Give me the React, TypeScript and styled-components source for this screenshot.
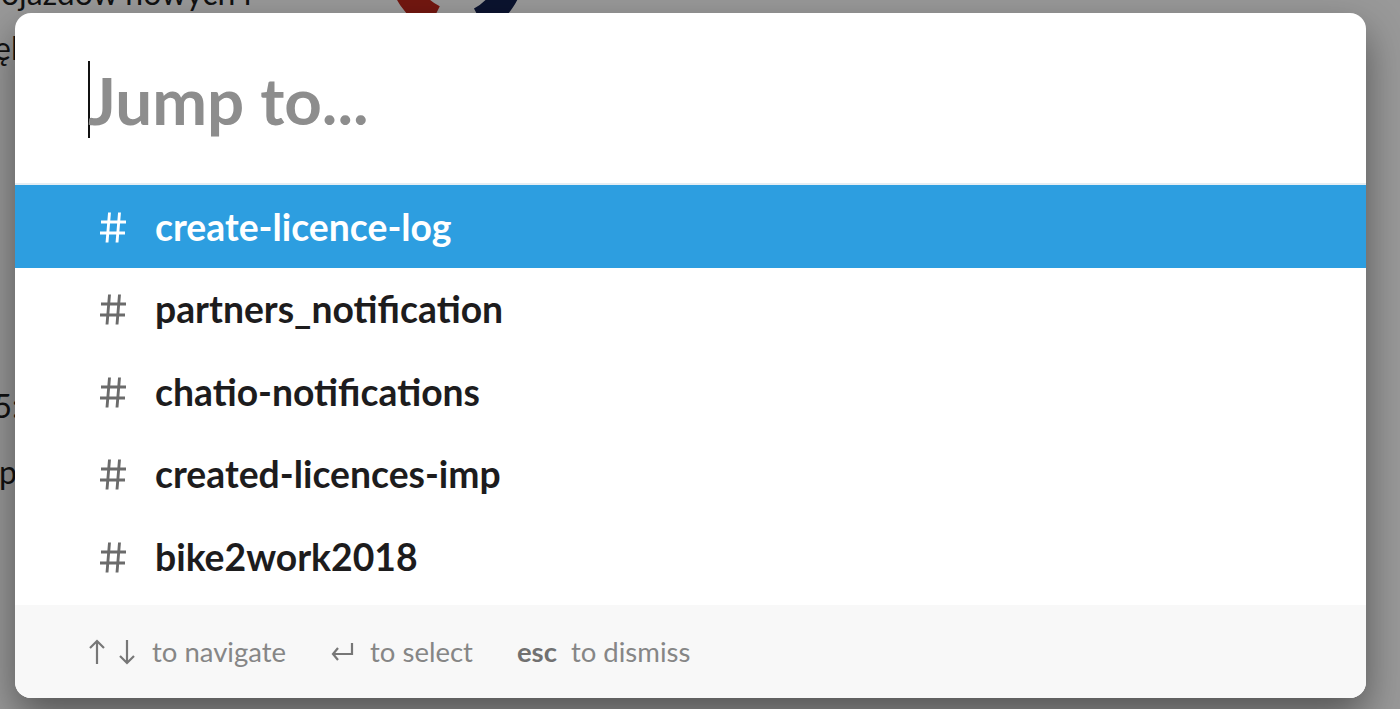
import React from 'react'
import styled, { createGlobalStyle } from 'styled-components'

const GlobalStyle = createGlobalStyle`
  html, body {
    margin: 0;
    padding: 0;
    width: 100%;
    height: 100%;
    overflow: hidden;
    font-family: Lato, "Noto Sans", sans-serif;
  }
`

const Page = styled.div`
  position: fixed;
  inset: 0;
  background: #fff;
  color: #1d1d1d;
  font-size: 32px;
  overflow: hidden;
`

const PageText = styled.div<{ top: number, left: number }>`
  position: absolute;
  left: ${p => p.left}px;
  top: ${p => p.top}px;
  white-space: nowrap;
`

const Logo = styled.svg`
  position: absolute;
  left: 376px;
  top: -120px;
`

const Overlay = styled.div`
  position: fixed;
  inset: 0;
  background: rgba(0, 0, 0, 0.4);
  display: flex;
  align-items: flex-start;
  padding: 13px 34px 0 15px;
`

const Modal = styled.div`
  width: 1351px;
  height: 685px;
  background: #fff;
  border-radius: 16px;
  overflow: hidden;
  display: flex;
  flex-direction: column;
  box-shadow: 0 18px 40px rgba(0, 0, 0, 0.45);
`

const InputRow = styled.div`
  height: 172px;
  flex: none;
  display: flex;
  align-items: center;
  padding-left: 73px;
  border-bottom: 2px solid #e4edf3;
  box-sizing: border-box;
`

const Caret = styled.span`
  width: 2px;
  height: 77px;
  background: #111;
  margin-top: 2px;
  margin-right: -2px;
`

const Placeholder = styled.span`
  font-size: 65.5px;
  font-weight: 700;
  color: #8d8d8d;
  margin-top: 2px;
`

const List = styled.div`
  flex: 1;
  display: flex;
  flex-direction: column;
`

const Row = styled.div<{ selected?: boolean }>`
  height: 82.5px;
  flex: none;
  display: flex;
  align-items: center;
  padding-left: 84px;
  background: ${p => (p.selected ? '#2d9ee0' : 'transparent')};
  color: ${p => (p.selected ? '#fff' : '#1d1c1d')};
`

const HashIcon = styled.svg`
  flex: none;
  margin-right: 28px;
  margin-top: 2px;
`

const Name = styled.span`
  font-size: 37.3px;
  font-weight: 700;
`

const Footer = styled.div`
  height: 93px;
  flex: none;
  background: #f8f8f8;
  display: flex;
  align-items: center;
  padding-left: 73px;
  font-size: 27.5px;
  color: #868686;
`

const Hint = styled.span`
  display: flex;
  align-items: center;
  margin-right: 44px;
`

const Key = styled.span<{ bold?: boolean }>`
  display: inline-flex;
  align-items: center;
  gap: 12px;
  margin-right: ${p => (p.bold ? 14 : 16)}px;
  color: ${p => (p.bold ? '#717171' : '#7a7a7a')};
  font-weight: ${p => (p.bold ? 700 : 400)};
`

const channels = [
  'create-licence-log',
  'partners_notification',
  'chatio-notifications',
  'created-licences-imp',
  'bike2work2018'
]

function Hash (props: { selected?: boolean }) {
  const c = props.selected ? '#fff' : '#6b6b6b'
  return (
    <HashIcon width="28" height="33" viewBox="0 0 28 33" fill="none" stroke={c} strokeWidth="2.9">
      <path d="M10.5 1.5L8 31.5M20.5 1.5L18 31.5M2 11h25M1 22h25" />
    </HashIcon>
  )
}

function ArrowUp () {
  return (
    <svg width="18" height="28" viewBox="0 0 18 28" fill="none" stroke="#777" strokeWidth="2.2">
      <path d="M9 26V3M2 10l7-7 7 7" />
    </svg>
  )
}

function ArrowDown () {
  return (
    <svg width="18" height="28" viewBox="0 0 18 28" fill="none" stroke="#777" strokeWidth="2.2">
      <path d="M9 2v23M2 18l7 7 7-7" />
    </svg>
  )
}

function ReturnIcon () {
  return (
    <svg width="24" height="20" viewBox="0 0 24 20" fill="none" stroke="#777" strokeWidth="2.2">
      <path d="M22 1v11H3M8 6l-5 6 5 6" />
    </svg>
  )
}

export default function App () {
  return (
    <>
      <GlobalStyle />
      <Page>
        <PageText top={-27} left={-17}>pojazdów nowych i</PageText>
        <PageText top={28} left={-17}>ręl</PageText>
        <PageText top={386} left={-25}>35:</PageText>
        <PageText top={452} left={-17}>ap</PageText>
        <Logo width="160" height="160" viewBox="0 0 160 160">
          <path d="M25 90 A60 60 0 0 0 58 138" stroke="#c0271c" strokeWidth="26" fill="none" />
          <path d="M104 140 A60 60 0 0 0 136 92" stroke="#13204f" strokeWidth="26" fill="none" />
        </Logo>
      </Page>
      <Overlay>
        <Modal>
          <InputRow>
            <Caret />
            <Placeholder>Jump to...</Placeholder>
          </InputRow>
          <List>
            {channels.map((c, i) => (
              <Row key={c} selected={i === 0}>
                <Hash selected={i === 0} />
                <Name>{c}</Name>
              </Row>
            ))}
          </List>
          <Footer>
            <Hint>
              <Key><ArrowUp /><ArrowDown /></Key>
              to navigate
            </Hint>
            <Hint>
              <Key><ReturnIcon /></Key>
              to select
            </Hint>
            <Hint>
              <Key bold>esc</Key>
              to dismiss
            </Hint>
          </Footer>
        </Modal>
      </Overlay>
    </>
  )
}
